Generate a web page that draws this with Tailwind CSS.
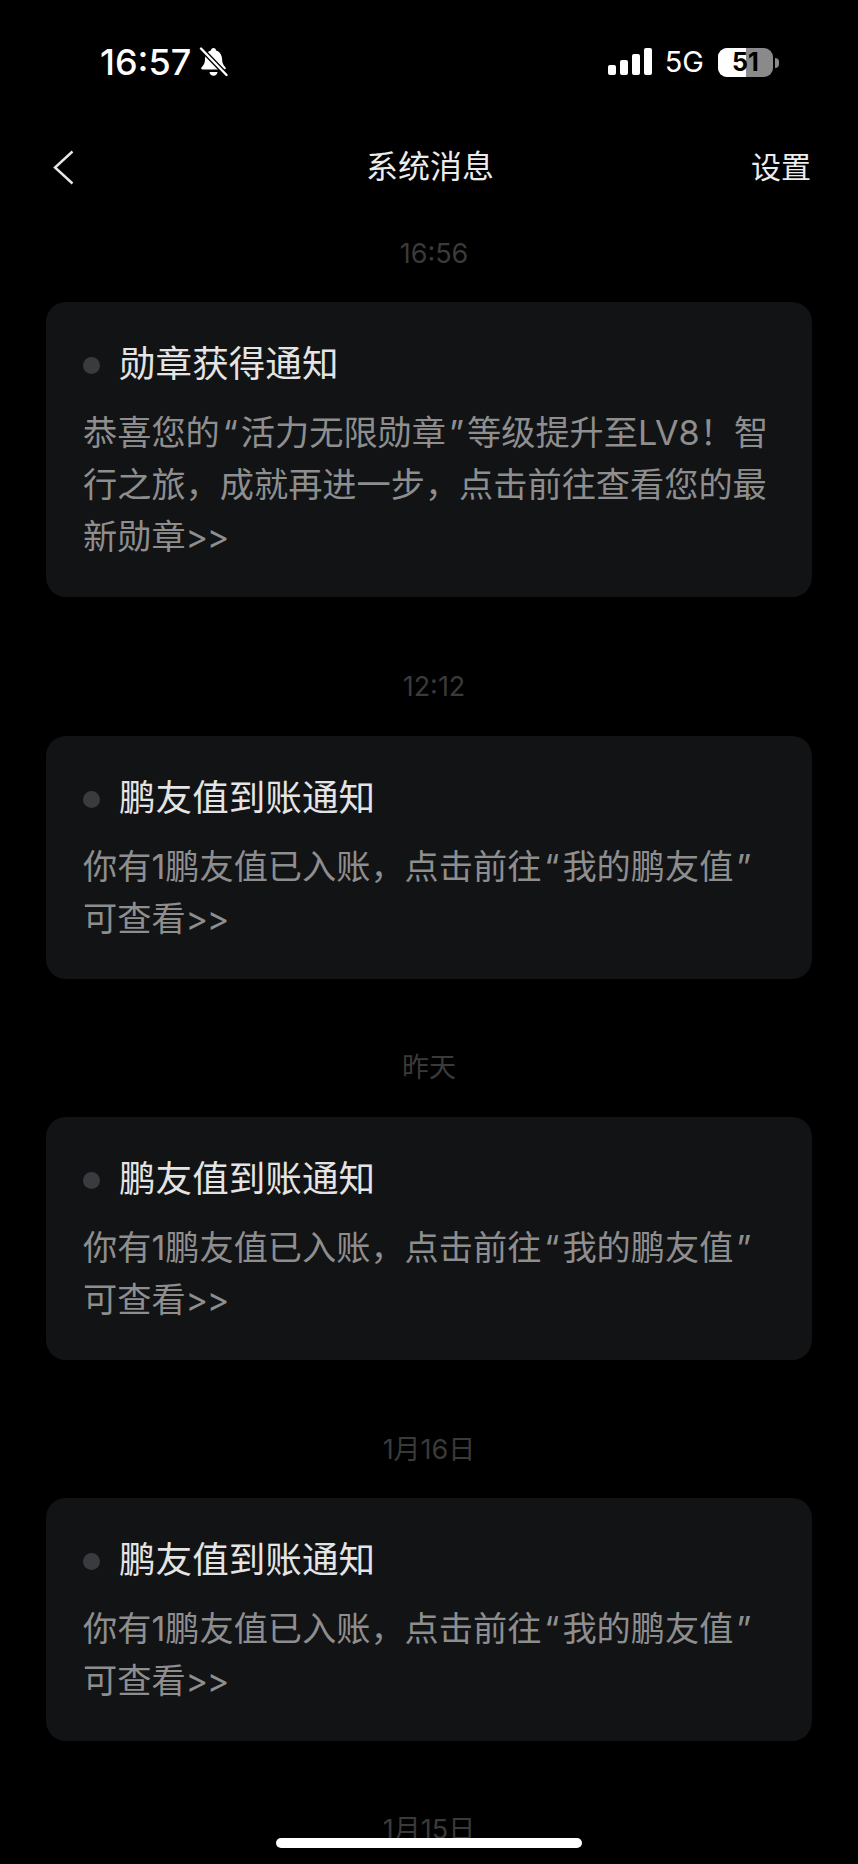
<!DOCTYPE html>
<html lang="zh-CN">
  <head>
    <meta charset="UTF-8" />
    <meta name="viewport" content="width=device-width, initial-scale=1.0" />
    <title>系统消息</title>
    <script src="https://cdn.jsdelivr.net/npm/@tailwindcss/browser@4"></script>
  </head>
  <body class="bg-black">
    <div class="relative h-[1864px] w-[858px] overflow-hidden bg-black font-['Inter','Noto_Sans_CJK_SC',sans-serif]">
      <!-- Status bar -->
      <div class="flex h-[124px] items-start justify-between pt-[44px] pl-[100px] pr-[79px]">
        <div class="flex items-center gap-[8px] text-white">
          <span class="text-[36px] leading-[36px] font-medium">16:57</span>
          <svg class="h-[30px] w-[29px]" viewBox="0 0 29 30" fill="none">
            <path d="M14.500 1c1.500 0 2.500 1 2.600 2.500 4 1.300 5.900 4.800 6 9 .1 3.200 1 5.400 3.300 7.800.8.900.3 2.200-1 2.200H3.600c-1.300 0-1.800-1.300-1-2.200C5 17.900 5.900 15.700 6 12.500c.1-4.200 2-7.700 5.900-9C12 2 13 1 14.500 1z" fill="#fff" />
            <path d="M10.500 25h8c-.2 2.300-1.900 3.800-4 3.800s-3.800-1.500-4-3.800z" fill="#fff" />
            <path d="M2 1.500L27.500 28" stroke="#000" stroke-width="5" />
            <path d="M2 1.500L27.500 28" stroke="#fff" stroke-width="2.400" stroke-linecap="round" />
          </svg>
        </div>
        <div class="flex items-start gap-[13px] pt-[4px]">
          <div class="flex h-[27px] items-end gap-[4px]">
            <div class="h-[10px] w-[8px] rounded-[2px] bg-white"></div>
            <div class="h-[15px] w-[8px] rounded-[2px] bg-white"></div>
            <div class="h-[21px] w-[8px] rounded-[2px] bg-white"></div>
            <div class="h-[27px] w-[8px] rounded-[2px] bg-white"></div>
          </div>
          <span class="text-[29px] leading-[28px] text-white">5G</span>
          <div class="flex items-center gap-[2px] pl-[1px]">
            <div class="relative flex h-[29px] w-[55px] items-center justify-center overflow-hidden rounded-[9px] bg-[#8a8a8a]">
              <div class="absolute inset-y-0 left-0 w-[28px] bg-white"></div>
              <span class="relative text-[25px] leading-[29px] font-bold text-black">51</span>
            </div>
            <div class="h-[10px] w-[4px] rounded-r-full bg-[#8a8a8a]"></div>
          </div>
        </div>
      </div>

      <!-- Nav bar -->
      <div class="relative flex h-[86px] items-center justify-between pl-[53px] pr-[47px]">
        <svg class="h-[35px] w-[21px]" viewBox="0 0 21 35" fill="none">
          <path d="M19.500 1.500L2 17.500L19.500 33.500" stroke="#e8e8e8" stroke-width="2.400" />
        </svg>
        <span class="absolute left-[366px] text-[32px] leading-[40px] text-[#ececec]">系统消息</span>
        <span class="text-[30px] leading-[40px] text-[#ececec]">设置</span>
      </div>

      <!-- Messages -->
      <div class="flex flex-col px-[46px]">
        <p class="pt-[29px] pl-[10px] text-center text-[27px] leading-[30px] text-[#3a3a3a]">16:56</p>
        <div class="mt-[33px] h-[295px] rounded-[20px] bg-[#121315] pt-[37px] pl-[37px]">
          <div class="flex items-center gap-[19px]">
            <div class="mt-[2px] h-[17px] w-[17px] rounded-full bg-[#3a3b3e]"></div>
            <span class="text-[36.600px] leading-[50px] text-[#e4e4e4]">勋章获得通知</span>
          </div>
          <p class="mt-[18px] text-[34.200px] leading-[52px] text-[#8e8e8f]">恭喜您的<span class="mx-[3px]">“</span>活力无限勋章<span class="mx-[3px]">”</span>等级提升至LV8！智<br />行之旅，成就再进一步，点击前往查看您的最<br />新勋章<span class="tracking-[-1.500px]">&gt;&gt;</span></p>
        </div>

        <p class="mt-[75px] pl-[10px] text-center text-[27px] leading-[30px] text-[#3a3a3a]">12:12</p>
        <div class="mt-[34px] h-[243px] rounded-[20px] bg-[#121315] pt-[37px] pl-[37px]">
          <div class="flex items-center gap-[19px]">
            <div class="mt-[2px] h-[17px] w-[17px] rounded-full bg-[#3a3b3e]"></div>
            <span class="text-[36.600px] leading-[50px] text-[#e4e4e4]">鹏友值到账通知</span>
          </div>
          <p class="mt-[18px] text-[34.200px] leading-[52px] text-[#8e8e8f]">你有1鹏友值已入账，点击前往<span class="mx-[3px]">“</span>我的鹏友值<span class="mx-[3px]">”</span><br />可查看<span class="tracking-[-1.500px]">&gt;&gt;</span></p>
        </div>

        <p class="mt-[74px] text-center text-[27px] leading-[30px] text-[#3a3a3a]">昨天</p>
        <div class="mt-[34px] h-[243px] rounded-[20px] bg-[#121315] pt-[37px] pl-[37px]">
          <div class="flex items-center gap-[19px]">
            <div class="mt-[2px] h-[17px] w-[17px] rounded-full bg-[#3a3b3e]"></div>
            <span class="text-[36.600px] leading-[50px] text-[#e4e4e4]">鹏友值到账通知</span>
          </div>
          <p class="mt-[18px] text-[34.200px] leading-[52px] text-[#8e8e8f]">你有1鹏友值已入账，点击前往<span class="mx-[3px]">“</span>我的鹏友值<span class="mx-[3px]">”</span><br />可查看<span class="tracking-[-1.500px]">&gt;&gt;</span></p>
        </div>

        <p class="mt-[75px] text-center text-[27px] leading-[30px] text-[#3a3a3a]">1月16日</p>
        <div class="mt-[33px] h-[243px] rounded-[20px] bg-[#121315] pt-[37px] pl-[37px]">
          <div class="flex items-center gap-[19px]">
            <div class="mt-[2px] h-[17px] w-[17px] rounded-full bg-[#3a3b3e]"></div>
            <span class="text-[36.600px] leading-[50px] text-[#e4e4e4]">鹏友值到账通知</span>
          </div>
          <p class="mt-[18px] text-[34.200px] leading-[52px] text-[#8e8e8f]">你有1鹏友值已入账，点击前往<span class="mx-[3px]">“</span>我的鹏友值<span class="mx-[3px]">”</span><br />可查看<span class="tracking-[-1.500px]">&gt;&gt;</span></p>
        </div>

        <p class="mt-[74px] text-center text-[27px] leading-[30px] text-[#3a3a3a]">1月15日</p>
      </div>

      <!-- Home indicator -->
      <div class="absolute top-[1838px] left-[276px] h-[10px] w-[306px] rounded-full bg-white"></div>
    </div>
  </body>
</html>
